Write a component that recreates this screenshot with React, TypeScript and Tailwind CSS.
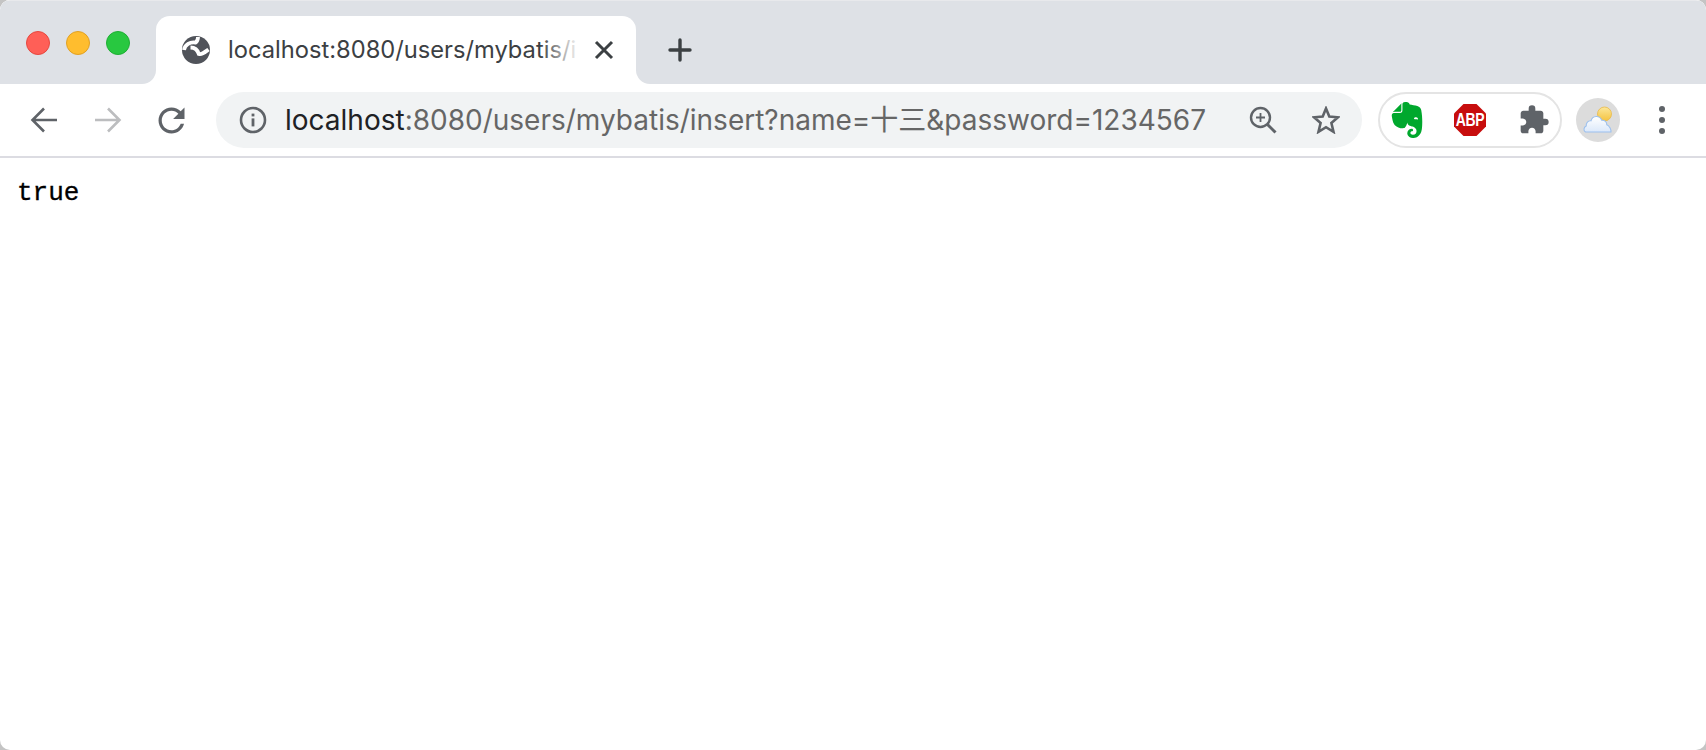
import { MdExtension } from 'react-icons/md';
import { SiEvernote } from 'react-icons/si';

const uiFont = 'font-["Inter","Noto_Sans_CJK_SC",sans-serif]';

function TrafficLight({ color, edge }: { color: string; edge: string }) {
  return (
    <svg width="24" height="24" viewBox="0 0 24 24" aria-hidden>
      <circle cx="12" cy="12" r="11.5" fill={color} stroke={edge} strokeWidth="1" />
    </svg>
  );
}

function GlobeIcon() {
  return (
    <svg width="28" height="28" viewBox="0 0 28 28" fill="none" aria-hidden>
      <circle cx="14" cy="14" r="14" fill="#50535a" />
      <path d="M2 14C3 8.5 8 5.8 13.5 6.6 15.4 5.4 16 3.5 16 1" stroke="#fff" strokeWidth="3.8" />
      <path d="M8.5 11.5C12.5 11.5 15.5 13.5 16.8 18 19.5 19 22.5 16.5 26.5 13.5" stroke="#fff" strokeWidth="3.8" />
    </svg>
  );
}

function ArrowIcon({ color, flip }: { color: string; flip?: boolean }) {
  return (
    <svg width="28" height="28" viewBox="0 0 28 28" fill="none" stroke={color} strokeWidth="2.6" aria-hidden className={flip ? '-scale-x-100' : ''}>
      <path d="M27 14H2.5M14 2.5 2.5 14 14 25.5" />
    </svg>
  );
}

function ReloadIcon() {
  return (
    <svg width="39" height="39" viewBox="0 0 24 24" fill="#5f6368" aria-hidden>
      <path d="M17.65 6.35C16.2 4.9 14.21 4 12 4c-4.42 0-7.99 3.58-7.99 8s3.57 8 7.99 8c3.73 0 6.84-2.55 7.73-6h-2.08c-.82 2.33-3.04 4-5.65 4-3.31 0-6-2.69-6-6s2.69-6 6-6c1.66 0 3.14.69 4.22 1.78L13 11h7V4l-2.35 2.35z" />
    </svg>
  );
}

function InfoIcon() {
  return (
    <svg width="28" height="28" viewBox="0 0 28 28" fill="none" aria-hidden>
      <circle cx="14" cy="14" r="12" stroke="#5f6368" strokeWidth="2.6" />
      <rect x="12.6" y="12.4" width="2.8" height="8" fill="#5f6368" />
      <rect x="12.6" y="7.6" width="2.8" height="2.8" fill="#5f6368" />
    </svg>
  );
}

function ZoomIcon() {
  return (
    <svg width="28" height="28" viewBox="0 0 28 28" fill="none" stroke="#5f6368" strokeWidth="2.4" aria-hidden>
      <circle cx="11.5" cy="11.5" r="9.5" />
      <path d="M18.5 18.5 26.5 26.5" strokeWidth="3" />
      <path d="M11.5 7v9M7 11.5h9" strokeWidth="1.8" />
    </svg>
  );
}

function StarIcon() {
  return (
    <svg width="28" height="28" viewBox="0 0 28 28" fill="none" stroke="#5f6368" strokeWidth="2.6" aria-hidden>
      <path d="M14 2.5 17.3 10.6 26 11.3 19.4 17 21.5 25.8 14 21.2 6.5 25.8 8.6 17 2 11.3 10.7 10.6Z" />
    </svg>
  );
}

function AbpBadge() {
  return (
    <div className="relative flex h-8 w-8 items-center justify-center">
      <svg width="32" height="32" viewBox="0 0 32 32" className="absolute inset-0" aria-hidden>
        <path d="M9.5 0H22.5L32 9.5V22.5L22.5 32H9.5L0 22.5V9.5Z" fill="#c70d0d" />
      </svg>
      <span className='relative scale-y-[1.25] font-["Liberation_Sans",sans-serif] text-[14px] font-bold leading-none tracking-[-0.3px] text-white'>ABP</span>
    </div>
  );
}

function WeatherAvatar() {
  return (
    <div className="flex h-11 w-11 items-center justify-center rounded-full bg-[#dcdcdc]">
      <svg width="30" height="28" viewBox="0 0 30 28" aria-hidden>
        <defs>
          <linearGradient id="sunFill" x1="0" y1="0" x2="0" y2="1">
            <stop offset="0" stopColor="#fbe79a" />
            <stop offset="1" stopColor="#f5c33f" />
          </linearGradient>
          <linearGradient id="cloudFill" x1="0" y1="0" x2="0" y2="1">
            <stop offset="0" stopColor="#ffffff" />
            <stop offset="1" stopColor="#dbe8fa" />
          </linearGradient>
        </defs>
        <circle cx="21.5" cy="8" r="7" fill="url(#sunFill)" stroke="#e9b949" strokeWidth="0.8" />
        <path d="M2.5 26C0 24.5.8 21 3.2 20 3 17 5 14.5 8 14.8 9.5 9.5 16.5 9 18.8 14.3 21.5 13.8 24 16 23.8 18.8 26.5 19.5 28.5 24 28 26Z" fill="url(#cloudFill)" stroke="#9cc0ee" strokeWidth="1.1" />
      </svg>
    </div>
  );
}

export default function App() {
  return (
    <div className="h-[750px] w-full bg-[#c4c4c4]">
      <div className="flex h-full flex-col overflow-hidden rounded-[10px] bg-white">
        {/* Tab strip: the grey pieces carry the rounded corners that flare out of the tab */}
        <div className="flex h-[84px] shrink-0 border-t border-[#e8e9ec] bg-white">
          <div className="flex w-[156px] shrink-0 items-start gap-4 rounded-br-[14px] bg-[#dee1e6] pl-[26px] pt-[30px]">
            <TrafficLight color="#ff5f57" edge="#e5483f" />
            <TrafficLight color="#ffbd2e" edge="#e0a024" />
            <TrafficLight color="#28c840" edge="#1fae34" />
          </div>
          <div className="flex w-[480px] shrink-0 flex-col bg-[#dee1e6]">
            <div className="h-[15px] shrink-0" />
            <div className="flex h-[68px] items-center rounded-t-[14px] bg-white pl-[26px] pr-[22px]">
              <GlobeIcon />
              <div className={`relative ml-[18px] min-w-0 flex-1 whitespace-nowrap text-[23.7px] leading-none text-[#3c4043] ${uiFont}`}>
                localhost:8080/users/mybatis/i
                <div className="absolute inset-y-0 right-0 w-10 bg-gradient-to-r from-white/0 to-white" />
              </div>
              <svg width="20" height="20" viewBox="0 0 20 20" stroke="#3c4043" strokeWidth="3" className="ml-[14px] shrink-0" aria-hidden>
                <path d="M2 2 18 18M18 2 2 18" />
              </svg>
            </div>
          </div>
          <div className="flex flex-1 items-start rounded-bl-[14px] bg-[#dee1e6] pl-[32px] pt-[37px]">
            <svg width="24" height="24" viewBox="0 0 24 24" stroke="#3c4043" strokeWidth="3.4" strokeLinecap="round" aria-hidden>
              <path d="M12 2v20M2 12h20" />
            </svg>
          </div>
        </div>

        {/* Toolbar */}
        <div className="flex h-[74px] shrink-0 items-center border-b-2 border-[#dcdce2] pl-[30px]">
          <ArrowIcon color="#5f6368" />
          <div className="ml-[36px]">
            <ArrowIcon color="#bcbdbf" flip />
          </div>
          <div className="ml-[30px]">
            <ReloadIcon />
          </div>
          <div className="ml-[25px] flex h-14 w-[1146px] shrink-0 items-center rounded-full bg-[#f1f3f4] pl-[23px] pr-[22px]">
            <InfoIcon />
            <div className={`ml-[18px] min-w-0 flex-1 whitespace-nowrap text-[28px] leading-none text-[#666] ${uiFont}`}>
              <span className="text-[#202124]">localhost</span>:8080/users/mybatis/insert?name=十三&amp;password=1234567
            </div>
            <ZoomIcon />
            <div className="ml-[35px]">
              <StarIcon />
            </div>
          </div>
          <div className="ml-[16px] flex h-14 w-[184px] shrink-0 items-center rounded-full border-2 border-[#e4e4e4] pl-[9px]">
            <SiEvernote className="h-9 w-9 text-[#00a82d]" />
            <div className="ml-[29px]">
              <AbpBadge />
            </div>
            <MdExtension className="ml-[32px] h-8 w-8 text-[#5f6368]" />
          </div>
          <div className="ml-[14px]">
            <WeatherAvatar />
          </div>
          <div className="ml-[39px] flex flex-col gap-[5px]">
            <span className="h-[6px] w-[6px] rounded-full bg-[#5f6368]" />
            <span className="h-[6px] w-[6px] rounded-full bg-[#5f6368]" />
            <span className="h-[6px] w-[6px] rounded-full bg-[#5f6368]" />
          </div>
        </div>

        {/* Page body */}
        <div className='flex-1 pl-[17px] pt-[19px] font-["Liberation_Mono",monospace] text-[26px] leading-[32px] text-black [-webkit-text-stroke:0.3px_black]'>
          true
        </div>
      </div>
    </div>
  );
}
